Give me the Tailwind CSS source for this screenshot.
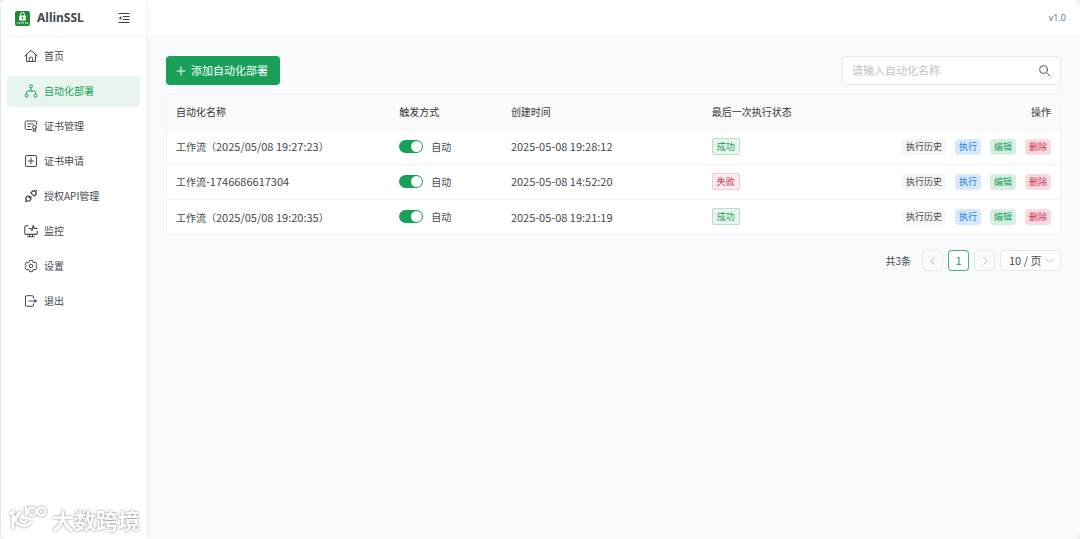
<!doctype html>
<html lang="zh-CN">

<head>
  <meta charset="UTF-8" />
  <meta name="viewport" content="width=device-width, initial-scale=1.0" />
  <title>AllinSSL</title>
  <script src="https://cdn.jsdelivr.net/npm/@tailwindcss/browser@4"></script>
</head>

<body class="min-h-screen bg-[#eef0f2] font-['Noto_Sans_CJK_SC',sans-serif] text-[10px] text-[#45484b]">
  <div class="flex min-h-screen overflow-hidden rounded-lg bg-[#f8fafc]">

    <!-- Sidebar -->
    <aside class="relative z-10 flex w-[146px] shrink-0 flex-col border-l border-gray-200 bg-white shadow-[1px_0_6px_rgba(0,0,0,0.06)]">
      <div class="flex h-[37px] items-center border-b border-gray-100 pr-4 pl-[14px]">
        <svg class="size-[15px]" viewBox="0 0 15 15">
          <rect width="15" height="15" rx="2" fill="#1f8b34" />
          <path d="M5.5 5V3.6a2 2 0 0 1 4 0V5" fill="none" stroke="#fff" stroke-width="1" />
          <rect x="4.2" y="4.6" width="6.6" height="4.8" rx=".8" fill="#fff" />
          <path d="M7.5 6v2" stroke="#1f8b34" stroke-width="1.2" />
          <path d="M1.5 12h2.2M4.5 11v1.8M6 11v1.8M7.5 12.6v-1.4h1v1.4M10 11.4h1.2v1.2H10M12.4 11v1.7h1.2" fill="none" stroke="#c9e8cf" stroke-width=".8" />
        </svg>
        <span class="ml-[7px] font-['Noto_Sans',sans-serif] text-[12px] font-bold">AllinSSL</span>
        <button class="ml-auto" aria-label="收起菜单">
          <svg class="size-3" viewBox="0 0 12 12" fill="none" stroke="#444" stroke-width="1">
            <path d="M.5 1.500h11M5 4.500h6.500M5 7.500h6.500M.5 10.500h11" />
            <path d="M3.4 4v4L.8 6z" fill="#444" stroke="none" />
          </svg>
        </button>
      </div>

      <nav class="flex flex-col gap-1 px-[6px] py-1">
        <a href="#" class="flex h-[31px] items-center gap-[6px] rounded px-[17px] pb-[2px]">
          <svg class="size-[14px]" viewBox="0 0 14 14" fill="none" stroke="currentColor" stroke-linecap="round" stroke-linejoin="round">
            <path d="M.8 7 7 1.3 13.2 7M2.5 5.800v6.700h9V5.800M5.300 12.500V9.200a1 1 0 0 1 1-1h1.400a1 1 0 0 1 1 1v3.300" />
          </svg>
          首页
        </a>
        <a href="#" class="flex h-[31px] items-center gap-[6px] rounded bg-[#e8f5ee] px-[17px] pb-[2px] text-[#18a058]">
          <svg class="size-[14px]" viewBox="0 0 14 14" fill="none" stroke="currentColor" stroke-linejoin="round">
            <circle cx="7" cy="2.3" r="1.5" />
            <circle cx="2.5" cy="11.7" r="1.5" />
            <circle cx="11.5" cy="11.7" r="1.5" />
            <path d="M7 3.8V7M2.5 10.2V8.5A1.5 1.5 0 0 1 4 7h6a1.5 1.5 0 0 1 1.5 1.5v1.7" />
          </svg>
          自动化部署
        </a>
        <a href="#" class="flex h-[31px] items-center gap-[6px] rounded px-[17px] pb-[2px]">
          <svg class="size-[14px]" viewBox="0 0 14 14" fill="none" stroke="currentColor" stroke-linecap="round" stroke-linejoin="round">
            <path d="M7.8 10.5H2.5a1.3 1.3 0 0 1-1.3-1.3V3.3A1.3 1.3 0 0 1 2.5 2h8.7a1.3 1.3 0 0 1 1.3 1.3v2M3.7 5h5.8M3.7 7.5H6" />
            <circle cx="10.5" cy="8" r="1.8" />
            <path d="M9.3 9.6v3l1.2-.8 1.2.8v-3" />
          </svg>
          证书管理
        </a>
        <a href="#" class="flex h-[31px] items-center gap-[6px] rounded px-[17px] pb-[2px]">
          <svg class="size-[14px]" viewBox="0 0 14 14" fill="none" stroke="currentColor" stroke-linecap="round">
            <rect x="1.5" y="1.5" width="11" height="11" rx="1.5" />
            <path d="M7 4.2v5.6M4.2 7h5.6" />
          </svg>
          证书申请
        </a>
        <a href="#" class="flex h-[31px] items-center gap-[6px] rounded px-[17px] pb-[2px]">
          <svg class="size-[14px]" viewBox="0 0 14 14" fill="none" stroke="currentColor" stroke-width="1.2" stroke-linecap="round" stroke-linejoin="round">
            <path d="m6.800 3.800 3.400 3.400 1.200-1.200a2.400 2.400 0 0 0-3.400-3.400zM11.400 2.600l1.100-1.100" />
            <path d="m3.800 6.800 3.400 3.400L6 11.400A2.400 2.400 0 0 1 2.600 8zM2.600 11.400l-1.100 1.100M5.300 8l1-1M6.300 9.100l1-1" />
          </svg>
          授权API管理
        </a>
        <a href="#" class="flex h-[31px] items-center gap-[6px] rounded px-[17px] pb-[2px]">
          <svg class="size-[14px]" viewBox="0 0 14 14" fill="none" stroke="currentColor" stroke-width="1.1" stroke-linecap="round" stroke-linejoin="round">
            <path d="M4.200 1.700H2A1.2 1.2 0 0 0 .8 2.900v6.300A1.2 1.2 0 0 0 2 10.400h10a1.2 1.2 0 0 0 1.2-1.2V7.200M5.5 10.500v2M8.5 10.500v2M3.8 12.700h6.4" />
            <path d="M5 4.500h1.700L8 6.500l1.200-5 1.300 3H13" />
          </svg>
          监控
        </a>
        <a href="#" class="flex h-[31px] items-center gap-[6px] rounded px-[17px] pb-[2px]">
          <svg class="size-[14px]" viewBox="0 0 24 24" fill="none" stroke="currentColor" stroke-width="1.7" stroke-linejoin="round">
            <path d="M9.6 2.2h4.8l.7 3.1 1.9 1.1 3-1 2.4 4.2-2.3 2.1v.6l2.3 2.1-2.4 4.2-3-1-1.9 1.1-.7 3.1H9.6l-.7-3.1L7 17.6l-3 1-2.4-4.2 2.3-2.1v-.6L1.6 9.6 4 5.400l3 1 1.900-1.100z" />
            <circle cx="12" cy="12" r="3" />
          </svg>
          设置
        </a>
        <a href="#" class="flex h-[31px] items-center gap-[6px] rounded px-[17px] pb-[2px]">
          <svg class="size-[14px]" viewBox="0 0 14 14" fill="none" stroke="currentColor" stroke-linecap="round" stroke-linejoin="round">
            <path d="M9.500 4V3A1.300 1.300 0 0 0 8.200 1.700H2.800A1.300 1.300 0 0 0 1.500 3v8a1.300 1.300 0 0 0 1.300 1.300h5.400A1.300 1.300 0 0 0 9.500 11v-1M5 7h7" />
            <path d="M10.500 4.800 13 7l-2.500 2.200z" fill="currentColor" stroke="none" />
          </svg>
          退出
        </a>
      </nav>
    </aside>

    <div class="flex min-w-0 flex-1 flex-col">
      <header class="flex h-[37px] shrink-0 items-center justify-end border-b border-gray-100 bg-white px-[14px] font-['Noto_Sans',sans-serif] text-[9px] text-gray-500">
        v1.0
      </header>

      <main class="flex flex-col px-5 pt-[19px] pr-[19px]">
        <!-- Toolbar -->
        <div class="flex items-center justify-between">
          <button class="flex h-[29px] items-center gap-1 rounded bg-[#18a058] pr-3 pl-[9px] text-[11px] text-white">
            <svg class="size-3" viewBox="0 0 12 12" stroke="currentColor" stroke-linecap="round">
              <path d="M6 2v8M2 6h8" />
            </svg>
            添加自动化部署
          </button>
          <div class="flex h-[29px] w-[219px] items-center rounded border border-[#e8e8ed] bg-white px-[9px]">
            <input type="text" aria-label="自动化名称" placeholder="请输入自动化名称"
              class="min-w-0 flex-1 text-[11px] outline-none placeholder:text-[#c2c2c2]" />
            <button aria-label="搜索">
              <svg class="size-[13px]" viewBox="0 0 13 13" fill="none" stroke="#555" stroke-linecap="round">
                <circle cx="5.5" cy="5.5" r="3.9" />
                <path d="m8.5 8.5 3.4 3.4" />
              </svg>
            </button>
          </div>
        </div>

        <!-- Workflow table -->
        <div class="mt-[9px] overflow-hidden rounded-sm border border-[#f3f3f7] bg-white">
          <table class="w-full table-fixed text-left">
            <thead>
              <tr class="h-[34px] bg-[#fafafc] text-[#333639]">
                <th class="w-[25%] px-[9px] font-normal">自动化名称</th>
                <th class="w-[12.5%] px-[9px] font-normal">触发方式</th>
                <th class="w-[22.5%] px-[9px] font-normal">创建时间</th>
                <th class="px-[9px] font-normal">最后一次执行状态</th>
                <th class="px-[9px] text-right font-normal">操作</th>
              </tr>
            </thead>
            <tbody>
              <tr class="h-[35px] border-t border-[#f3f3f7]">
                <td class="px-[9px]">工作流（<span class="text-[11px]">2025/05/08 19:27:23</span>）</td>
                <td class="px-[9px]">
                  <label class="flex items-center gap-2">
                    <input type="checkbox" checked
                      class="h-[13px] w-6 appearance-none rounded-full bg-gray-300 p-px before:block before:size-[11px] before:rounded-full before:bg-white checked:bg-[#18a058] checked:before:ml-auto" />
                    自动
                  </label>
                </td>
                <td class="px-[9px] text-[11px]">2025-05-08 19:28:12</td>
                <td class="px-[9px]">
                  <span class="inline-flex h-[17px] items-center rounded-[2px] border border-[#b9e0cb] bg-[#e7f5ee] px-1 text-[9px] text-[#18a058]">成功</span>
                </td>
                <td class="px-[9px]">
                  <div class="flex justify-end gap-[9px] text-[9px]">
                    <button class="h-4 rounded bg-[#f4f5f5] px-1">执行历史</button>
                    <button class="h-4 rounded bg-[#d9e8fd] px-1 text-[#2080f0]">执行</button>
                    <button class="h-4 rounded bg-[#d6efe1] px-1 text-[#18a058]">编辑</button>
                    <button class="h-4 rounded bg-[#f8dbe1] px-1 text-[#d03050]">删除</button>
                  </div>
                </td>
              </tr>
              <tr class="h-[35px] border-t border-[#f3f3f7]">
                <td class="px-[9px]">工作流<span class="text-[11px]">-1746686617304</span></td>
                <td class="px-[9px]">
                  <label class="flex items-center gap-2">
                    <input type="checkbox" checked
                      class="h-[13px] w-6 appearance-none rounded-full bg-gray-300 p-px before:block before:size-[11px] before:rounded-full before:bg-white checked:bg-[#18a058] checked:before:ml-auto" />
                    自动
                  </label>
                </td>
                <td class="px-[9px] text-[11px]">2025-05-08 14:52:20</td>
                <td class="px-[9px]">
                  <span class="inline-flex h-[17px] items-center rounded-[2px] border border-[#f3cbd3] bg-[#fbeaed] px-1 text-[9px] text-[#d03050]">失败</span>
                </td>
                <td class="px-[9px]">
                  <div class="flex justify-end gap-[9px] text-[9px]">
                    <button class="h-4 rounded bg-[#f4f5f5] px-1">执行历史</button>
                    <button class="h-4 rounded bg-[#d9e8fd] px-1 text-[#2080f0]">执行</button>
                    <button class="h-4 rounded bg-[#d6efe1] px-1 text-[#18a058]">编辑</button>
                    <button class="h-4 rounded bg-[#f8dbe1] px-1 text-[#d03050]">删除</button>
                  </div>
                </td>
              </tr>
              <tr class="h-[35px] border-t border-[#f3f3f7]">
                <td class="px-[9px]">工作流（<span class="text-[11px]">2025/05/08 19:20:35</span>）</td>
                <td class="px-[9px]">
                  <label class="flex items-center gap-2">
                    <input type="checkbox" checked
                      class="h-[13px] w-6 appearance-none rounded-full bg-gray-300 p-px before:block before:size-[11px] before:rounded-full before:bg-white checked:bg-[#18a058] checked:before:ml-auto" />
                    自动
                  </label>
                </td>
                <td class="px-[9px] text-[11px]">2025-05-08 19:21:19</td>
                <td class="px-[9px]">
                  <span class="inline-flex h-[17px] items-center rounded-[2px] border border-[#b9e0cb] bg-[#e7f5ee] px-1 text-[9px] text-[#18a058]">成功</span>
                </td>
                <td class="px-[9px]">
                  <div class="flex justify-end gap-[9px] text-[9px]">
                    <button class="h-4 rounded bg-[#f4f5f5] px-1">执行历史</button>
                    <button class="h-4 rounded bg-[#d9e8fd] px-1 text-[#2080f0]">执行</button>
                    <button class="h-4 rounded bg-[#d6efe1] px-1 text-[#18a058]">编辑</button>
                    <button class="h-4 rounded bg-[#f8dbe1] px-1 text-[#d03050]">删除</button>
                  </div>
                </td>
              </tr>
            </tbody>
          </table>
        </div>

        <!-- Pagination -->
        <div class="mt-[15px] flex items-center justify-end gap-[5px] text-[11px]">
          <span class="mr-[6px] text-[10px]">共3条</span>
          <button disabled aria-label="上一页" class="flex size-[21px] items-center justify-center rounded border border-[#e8e8ed] bg-[#fafafc] text-[#c2c2c2]">
            <svg class="size-[10px]" viewBox="0 0 10 10" fill="none" stroke="currentColor" stroke-linecap="round"><path d="M6.5 1.5 3 5l3.5 3.5" /></svg>
          </button>
          <button class="flex size-[21px] items-center justify-center rounded border border-[#18a058]/80 bg-white text-[#18a058]">1</button>
          <button disabled aria-label="下一页" class="flex size-[21px] items-center justify-center rounded border border-[#e8e8ed] bg-[#fafafc] text-[#c2c2c2]">
            <svg class="size-[10px]" viewBox="0 0 10 10" fill="none" stroke="currentColor" stroke-linecap="round"><path d="M3.5 1.5 7 5 3.5 8.5" /></svg>
          </button>
          <div class="relative">
            <select aria-label="每页条数" class="block h-[21px] w-[61px] appearance-none rounded border border-[#e8e8ed] bg-white pl-2">
              <option>10 / 页</option>
              <option>20 / 页</option>
              <option>50 / 页</option>
            </select>
            <svg class="pointer-events-none absolute top-[6px] right-[7px] size-[9px]" viewBox="0 0 9 9" fill="none" stroke="#c2c2c2" stroke-linecap="round"><path d="M1 3l3.5 3.3L8 3" /></svg>
          </div>
        </div>
      </main>
    </div>
  </div>

  <!-- Watermark -->
  <div class="pointer-events-none fixed bottom-1 left-2 z-20 flex items-center gap-1 text-white">
    <svg class="h-8 w-10 drop-shadow-[0_0_1px_rgba(0,0,0,0.5)]" viewBox="0 0 40 32" fill="none" stroke="currentColor" stroke-width="3" stroke-linecap="round">
      <path d="M2.500 10.500 5 8.800V25M12 9.500 7 15.500a9 9 0 0 0 15.500 4M12.500 17.500a4 4 0 0 0 5.500 1" />
      <path d="M18 4.500V12" stroke-width="2.400" />
      <circle cx="24" cy="8.500" r="4" stroke-width="2.400" />
      <circle cx="33.500" cy="8.500" r="4" stroke-width="2.400" />
    </svg>
    <span class="text-[22px] leading-8 font-bold drop-shadow-[0_0_1px_rgba(0,0,0,0.5)]">大数跨境</span>
  </div>
</body>

</html>
